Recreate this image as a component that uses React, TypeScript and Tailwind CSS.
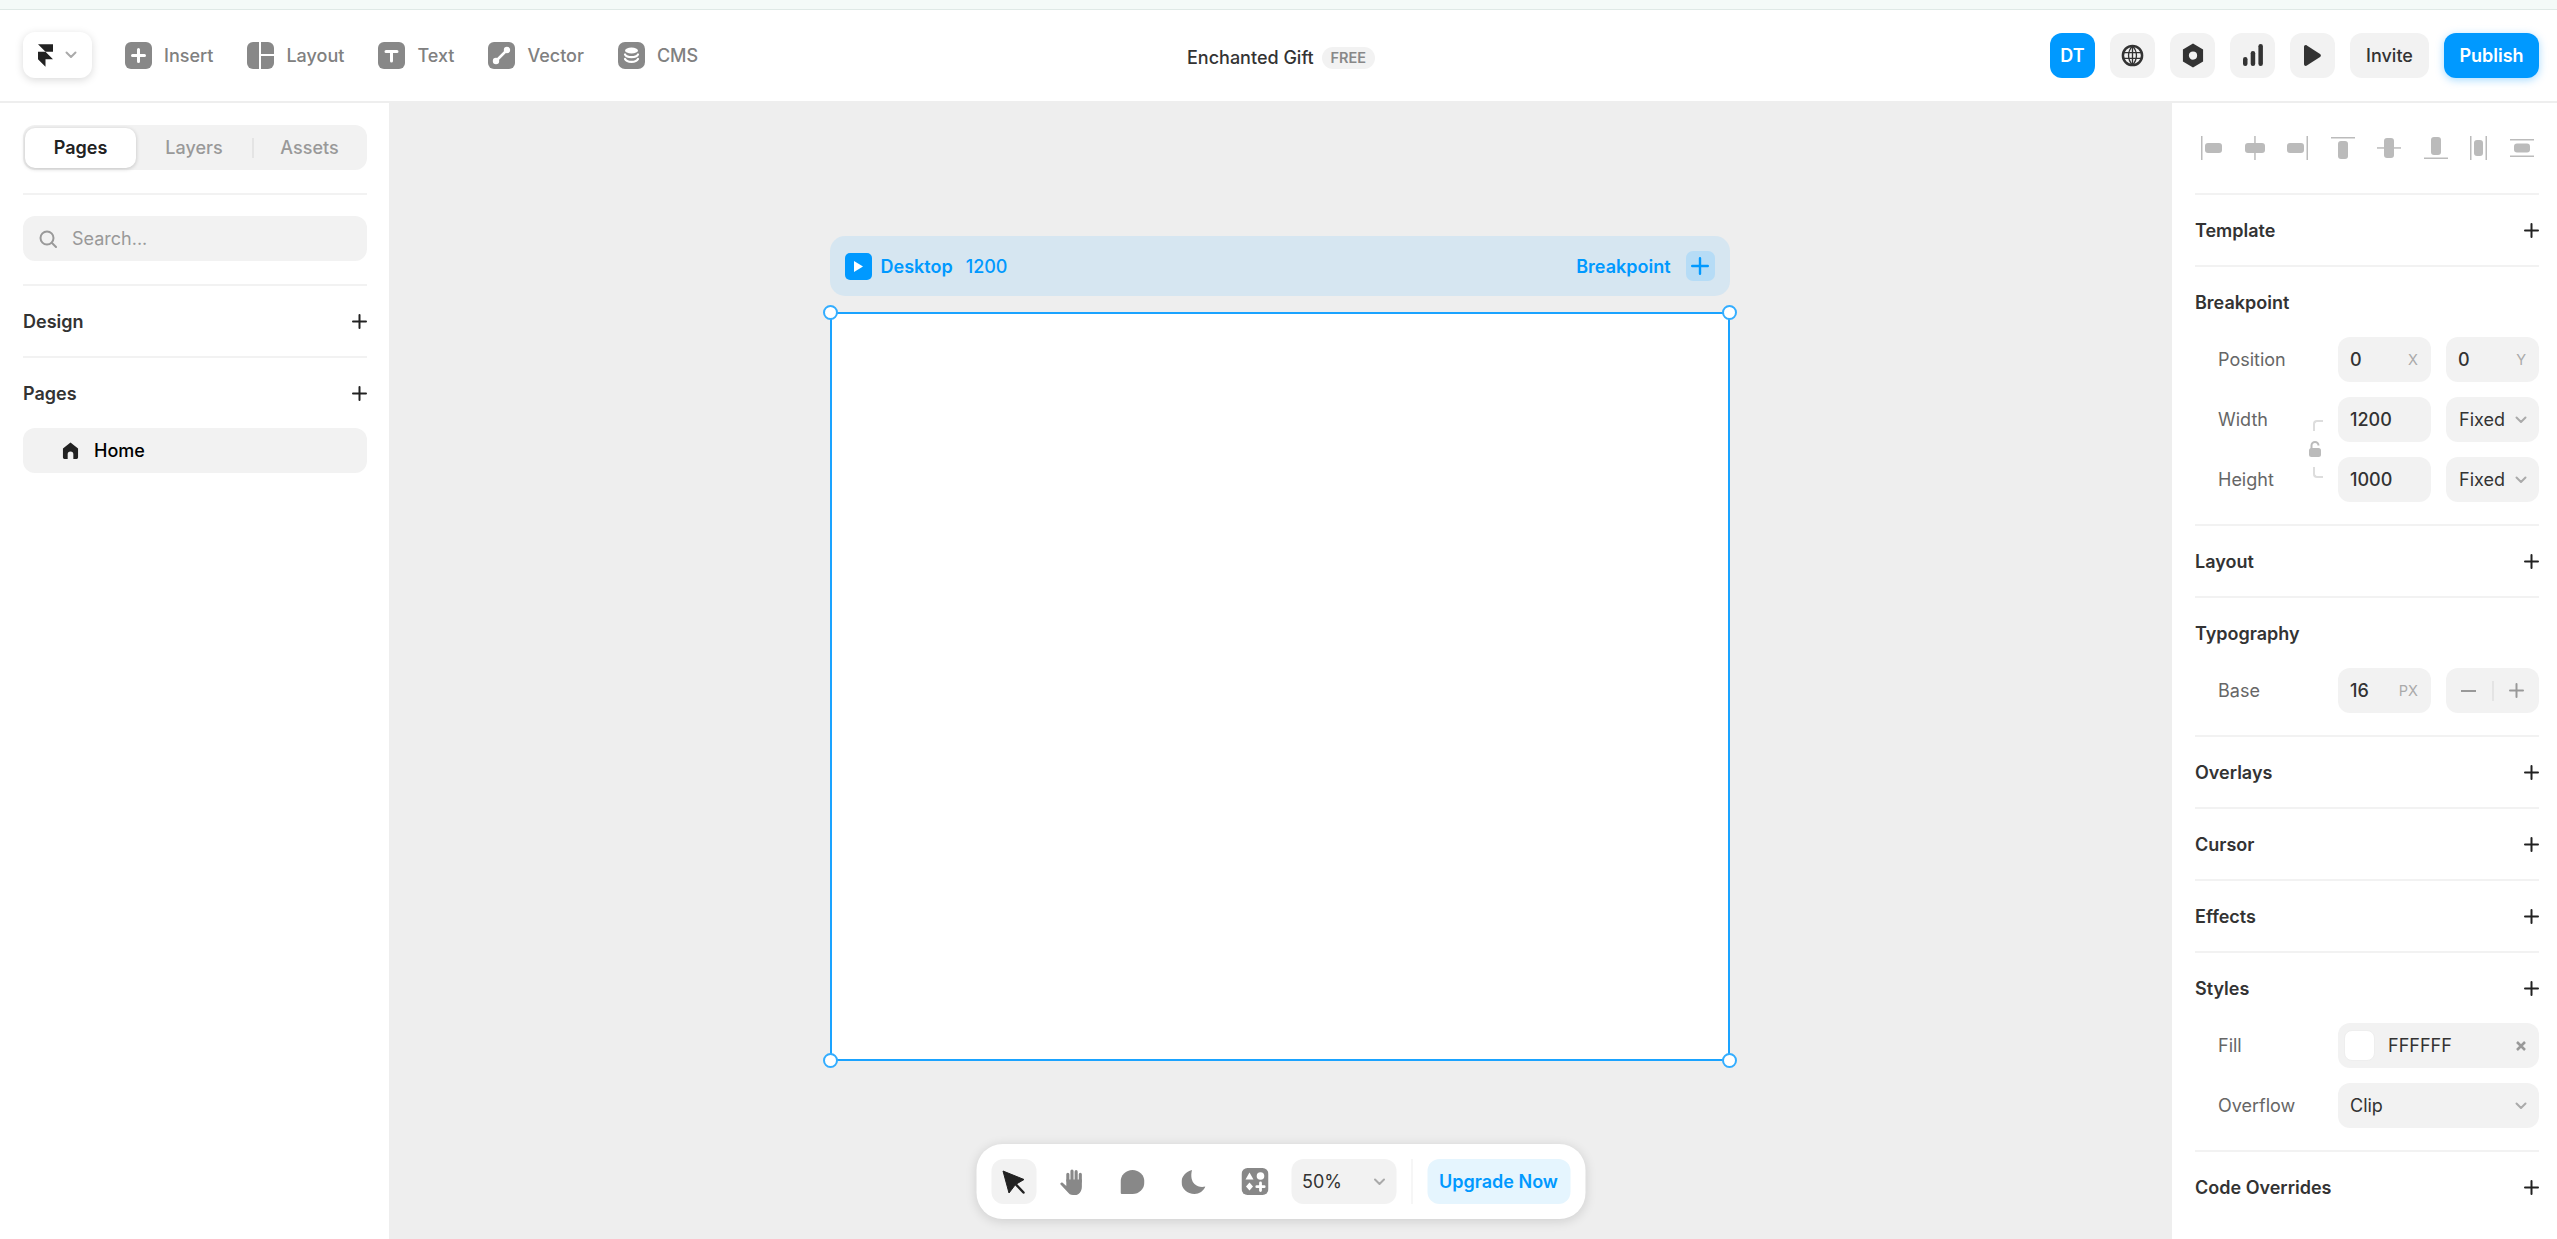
import type { ReactNode } from 'react'

const font = { fontFamily: 'Inter, "Liberation Sans", sans-serif' }

function Plus({ className = 'w-[15px] h-[15px] text-[#222]' }: { className?: string }) {
  return (
    <svg viewBox="0 0 15 15" className={className} fill="none" stroke="currentColor" strokeWidth="2" strokeLinecap="round">
      <path d="M7.5 1v13M1 7.5h13" />
    </svg>
  )
}

function Chevron({ className = 'w-[12px] h-[8px] text-[#aaa]' }: { className?: string }) {
  return (
    <svg viewBox="0 0 12 8" className={className} fill="none" stroke="currentColor" strokeWidth="2" strokeLinecap="round" strokeLinejoin="round">
      <path d="M1.5 1.5 6 6l4.5-4.5" />
    </svg>
  )
}

function FramerLogo() {
  return (
    <svg viewBox="0 0 16 24" className="w-[15px] h-[23px] text-[#222]" fill="currentColor">
      <path d="M0 0h16v8H8L0 0Z" />
      <path d="M0 8h8l8 8H8v8l-8-8V8Z" />
    </svg>
  )
}

function InsertIcon() {
  return (
    <svg viewBox="0 0 27 27" className="w-[27px] h-[27px]">
      <rect width="27" height="27" rx="6" fill="#888" />
      <path d="M13.5 7.5v12M7.5 13.5h12" stroke="#fff" strokeWidth="3" strokeLinecap="round" />
    </svg>
  )
}

function LayoutIcon() {
  return (
    <svg viewBox="0 0 27 27" className="w-[27px] h-[27px]" fill="#888">
      <path d="M6 0h6v27H6a6 6 0 0 1-6-6V6a6 6 0 0 1 6-6Z" />
      <path d="M14 0h7a6 6 0 0 1 6 6v6H14V0Z" />
      <path d="M14 14h13v7a6 6 0 0 1-6 6h-7V14Z" />
    </svg>
  )
}

function TextIcon() {
  return (
    <svg viewBox="0 0 27 27" className="w-[27px] h-[27px]">
      <rect width="27" height="27" rx="6" fill="#888" />
      <path d="M8 9.5h11M13.5 9.5V19" stroke="#fff" strokeWidth="3" strokeLinecap="round" />
    </svg>
  )
}

function VectorIcon() {
  return (
    <svg viewBox="0 0 27 27" className="w-[27px] h-[27px]">
      <rect width="27" height="27" rx="6" fill="#888" />
      <path d="M8.5 18.5 18.5 8.5" stroke="#fff" strokeWidth="2.5" />
      <circle cx="8" cy="19" r="3.2" fill="#fff" />
      <circle cx="19" cy="8" r="3.2" fill="#fff" />
    </svg>
  )
}

function CmsIcon() {
  return (
    <svg viewBox="0 0 27 27" className="w-[27px] h-[27px]">
      <rect width="27" height="27" rx="7" fill="#888" />
      <ellipse cx="13.5" cy="8.5" rx="6.5" ry="3" fill="#fff" />
      <path d="M7 12.5c1 1.8 3.5 2.7 6.5 2.7s5.500-.9 6.500-2.700M7 17c1 1.800 3.500 2.900 6.500 2.900s5.500-1.100 6.500-2.900" fill="none" stroke="#fff" strokeWidth="2.200" strokeLinecap="round" />
    </svg>
  )
}

function ToolItem({ icon, label }: { icon: ReactNode; label: string }) {
  return (
    <div className="flex items-center gap-[12px]">
      {icon}
      <span className="text-[18px] font-medium text-[#808080]">{label}</span>
    </div>
  )
}

function GrayButton({ children }: { children: ReactNode }) {
  return <div className="flex h-[45px] w-[45px] items-center justify-center rounded-[12px] bg-[#f2f2f2]">{children}</div>
}

function Divider() {
  return <div className="h-[2px] bg-[#f2f2f2]" />
}

function TopBar() {
  return (
    <header className="relative flex h-[91px] shrink-0 items-center justify-between bg-white pl-[23px] pr-[18px] pb-[1px]">
      <div className="flex items-center">
        <div className="flex h-[46px] w-[69px] items-center gap-[12px] rounded-[12px] bg-white pl-[15px] shadow-[0_2px_8px_rgba(0,0,0,0.15)]">
          <FramerLogo />
          <Chevron className="w-[12px] h-[8px] text-[#aaa]" />
        </div>
        <div className="ml-[33px] flex items-center gap-[34px]">
          <ToolItem icon={<InsertIcon />} label="Insert" />
          <ToolItem icon={<LayoutIcon />} label="Layout" />
          <ToolItem icon={<TextIcon />} label="Text" />
          <ToolItem icon={<VectorIcon />} label="Vector" />
          <ToolItem icon={<CmsIcon />} label="CMS" />
        </div>
      </div>
      <div className="absolute left-[1187px] top-[37px] flex items-center gap-[8px]">
        <span className="text-[18px] font-medium leading-[22px] text-[#333]">Enchanted Gift</span>
        <span className="flex h-[22px] w-[53px] items-center justify-center rounded-full bg-[#f2f2f2] text-[14.5px] font-semibold text-[#888]">FREE</span>
      </div>
      <div className="flex items-center gap-[15px]">
        <div className="flex h-[45px] w-[45px] items-center justify-center rounded-[12px] bg-[#0099ff] text-[18px] font-semibold text-white">DT</div>
        <GrayButton>
          <svg viewBox="0 0 24 24" className="w-[23px] h-[23px]" fill="none" stroke="#333" strokeWidth="2.600">
            <circle cx="12" cy="12" r="10" />
            <path d="M12 2c-5.500 6-5.500 14 0 20M12 2c5.500 6 5.500 14 0 20M3 9h18M3 15h18M12 2v20" strokeWidth="1.400" />
          </svg>
        </GrayButton>
        <GrayButton>
          <svg viewBox="0 0 24 26" className="w-[22px] h-[25px]">
            <path fillRule="evenodd" fill="#333" d="M12 0 23 6.500v13L12 26 1 19.500v-13L12 0Zm0 8.500a4.500 4.500 0 1 0 0 9 4.500 4.500 0 0 0 0-9Z" />
          </svg>
        </GrayButton>
        <GrayButton>
          <svg viewBox="0 0 20 22" className="w-[20px] h-[22px]" fill="#333">
            <rect x="0" y="13" width="4.500" height="9" rx="2.200" />
            <rect x="7.700" y="7" width="4.500" height="15" rx="2.200" />
            <rect x="15.400" y="0" width="4.500" height="22" rx="2.200" />
          </svg>
        </GrayButton>
        <GrayButton>
          <svg viewBox="0 0 18 22" className="w-[17px] h-[21px]" fill="#333">
            <path d="M0 2c0-1.700 1.600-2.500 3-1.700l14 9.200c1.200.8 1.200 2.200 0 3L3 21.700C1.600 22.500 0 21.700 0 20V2Z" />
          </svg>
        </GrayButton>
        <div className="flex h-[45px] w-[79px] items-center justify-center rounded-[12px] bg-[#f2f2f2] text-[18px] font-medium text-[#333]">Invite</div>
        <div className="flex h-[45px] w-[95px] items-center justify-center rounded-[12px] bg-[#0099ff] text-[18px] font-semibold text-white shadow-[0_2px_8px_rgba(0,153,255,0.35)]">Publish</div>
      </div>
    </header>
  )
}

function SideHeading({ title }: { title: string }) {
  return (
    <div className="flex h-[26px] items-center justify-between">
      <span className="text-[18px] font-semibold text-[#333]">{title}</span>
      <Plus />
    </div>
  )
}

function LeftPanel() {
  return (
    <aside className="flex w-[389px] shrink-0 flex-col bg-white pl-[23px] pr-[22px] pt-[22px]">
      <div className="flex h-[45px] items-center rounded-[12px] bg-[#f2f2f2] pl-[2px]">
        <div className="flex h-[40px] w-[111px] items-center justify-center rounded-[10px] bg-white text-[18px] font-semibold text-[#222] shadow-[0_1px_4px_rgba(0,0,0,0.2)]">Pages</div>
        <div className="flex w-[116px] justify-center text-[18px] font-medium text-[#999]">Layers</div>
        <div className="h-[20px] w-[2px] bg-[#e4e4e4]" />
        <div className="flex w-[111px] justify-center text-[18px] font-medium text-[#999]">Assets</div>
      </div>
      <div className="mt-[23px]">
        <Divider />
      </div>
      <div className="mt-[21px] flex h-[45px] items-center gap-[15px] rounded-[12px] bg-[#f2f2f2] pl-[16px]">
        <svg viewBox="0 0 18 18" className="w-[18px] h-[18px]" fill="none" stroke="#999" strokeWidth="2" strokeLinecap="round">
          <circle cx="8" cy="8" r="6.500" />
          <path d="m13 13 4 4" />
        </svg>
        <span className="text-[18px] text-[#999]">Search...</span>
      </div>
      <div className="mt-[23px]">
        <Divider />
      </div>
      <div className="py-[22px]">
        <SideHeading title="Design" />
      </div>
      <Divider />
      <div className="pt-[22px]">
        <SideHeading title="Pages" />
      </div>
      <div className="mt-[22px] flex h-[45px] items-center gap-[15px] rounded-[12px] bg-[#f2f2f2] pl-[39px]">
        <svg viewBox="0 0 18 18" className="w-[17px] h-[17px]" fill="#222">
          <path d="M9 0.500 17 7v9.500a1.500 1.500 0 0 1-1.500 1.500H12v-5a3 3 0 0 0-6 0v5H2.500A1.500 1.500 0 0 1 1 16.500V7l8-6.500Z" />
        </svg>
        <span className="text-[18px] font-medium text-black">Home</span>
      </div>
    </aside>
  )
}

function Handle({ className }: { className: string }) {
  return <div className={`absolute h-[15px] w-[15px] rounded-full border-2 border-[#33adff] bg-white ${className}`} />
}

function BottomToolbar() {
  return (
    <div className="absolute bottom-[20px] left-1/2 flex h-[75px] -translate-x-1/2 items-center gap-[16px] rounded-[26px] bg-white px-[15px] shadow-[0_2px_12px_rgba(0,0,0,0.14)]">
      <div className="flex h-[45px] w-[45px] items-center justify-center rounded-[12px] bg-[#f2f2f2]">
        <svg viewBox="0 0 24 24" className="w-[24px] h-[24px]" fill="#222">
          <path d="M1.500 1 22.500 9.500 14 14.500 7.500 23 1.500 1Z" strokeLinejoin="round" stroke="#222" strokeWidth="1" />
          <path d="m14 14 8 8.500" stroke="#222" strokeWidth="2.500" strokeLinecap="round" />
        </svg>
      </div>
      <div className="-ml-[3px] flex h-[45px] w-[45px] items-center justify-center">
        <svg viewBox="0 0 24 26" className="w-[25px] h-[27px]" fill="none" stroke="#888" strokeLinecap="round">
          <path d="M8 12V6M12 12V3M16 12V3.500M20 13V6" strokeWidth="3" />
          <path fill="#888" strokeWidth="0" d="M6.500 11h15v7c0 4.500-3 8-6.500 8h-2c-2.500 0-4-1.300-5.500-3.200L1 16c-.9-1.200.8-2.800 2-1.700l3.500 3V11Z" />
        </svg>
      </div>
      <div className="flex h-[45px] w-[45px] items-center justify-center">
        <svg viewBox="0 0 24 24" className="w-[24px] h-[24px]" fill="#888">
          <path d="M0 12a12 12 0 1 1 12 12H1.500A1.500 1.500 0 0 1 0 22.500V12Z" />
        </svg>
      </div>
      <div className="flex h-[45px] w-[45px] items-center justify-center">
        <svg viewBox="0 0 24 24" className="w-[24px] h-[24px]" fill="#888">
          <path d="M10.500 0C9 6 10 11 13 14c3 2.800 7 3.500 11 2.500C22 21 17.800 24 13 24 5.800 24 0 18.600 0 12 0 6.500 4.500 1.300 10.500 0Z" />
        </svg>
      </div>
      <div className="flex h-[45px] w-[45px] items-center justify-center">
        <svg viewBox="0 0 27 27" className="w-[27px] h-[27px]">
          <rect width="27" height="27" rx="6" fill="#888" />
          <path d="M8 4.500 12 11.500H4L8 4.500Z" fill="#fff" />
          <circle cx="19" cy="8" r="3.800" fill="#fff" />
          <path d="M8 14.500 11.500 18.500 8 22.500 4.500 18.500 8 14.500Z" fill="#fff" />
          <path d="M19 15v7.500M15.300 18.700h7.400" stroke="#fff" strokeWidth="2.800" strokeLinecap="round" />
        </svg>
      </div>
      <div className="-ml-[2px] flex h-[45px] w-[105px] items-center justify-between rounded-[12px] bg-[#f2f2f2] pl-[11px] pr-[11px]">
        <span className="text-[18px] text-[#333]">50%</span>
        <Chevron />
      </div>
      <div className="-mx-[1px] h-[45px] w-[1px] bg-[#eeeeee]" />
      <div className="flex h-[45px] w-[143px] items-center justify-center rounded-[12px] bg-[#e5f5fe] text-[18px] font-semibold text-[#0099ff]">Upgrade Now</div>
    </div>
  )
}

function Canvas() {
  return (
    <main className="relative flex min-w-0 flex-1 flex-col items-center bg-[#eeeeee] pr-[2px] pt-[133px]">
      <div className="flex h-[60px] w-[900px] items-center justify-between rounded-[15px] bg-[#d6e6f1] pl-[15px] pr-[15px]">
        <div className="flex items-center gap-[9px]">
          <div className="flex h-[27px] w-[27px] items-center justify-center rounded-[5px] bg-[#0099ff]">
            <svg viewBox="0 0 10 12" className="w-[9px] h-[11px]" fill="#fff">
              <path d="M0 0 10 6 0 12V0Z" />
            </svg>
          </div>
          <span className="text-[18px] font-semibold text-[#0099ff]">Desktop</span>
          <span className="ml-[4px] text-[18px] font-medium text-[#0099ff]">1200</span>
        </div>
        <div className="flex items-center gap-[15px]">
          <span className="text-[18px] font-semibold text-[#0099ff]">Breakpoint</span>
          <div className="flex h-[30px] w-[29px] items-center justify-center rounded-[7px] bg-[#b6dcf6]">
            <Plus className="w-[18px] h-[18px] text-[#0099ff]" />
          </div>
        </div>
      </div>
      <div className="relative mt-[16px] h-[749px] w-[900px] border-2 border-[#1aa3ff] bg-white">
        <Handle className="-left-[9px] -top-[9px]" />
        <Handle className="-right-[9px] -top-[9px]" />
        <Handle className="-bottom-[9px] -left-[9px]" />
        <Handle className="-bottom-[9px] -right-[9px]" />
      </div>
      <BottomToolbar />
    </main>
  )
}

function Section({ title, children, plus = true }: { title: string; children?: ReactNode; plus?: boolean }) {
  return (
    <section className="border-t-2 border-[#f2f2f2] py-[22px]">
      <div className="flex h-[26px] items-center justify-between">
        <span className="text-[18px] font-semibold text-[#333]">{title}</span>
        {plus && <Plus />}
      </div>
      {children && <div className="mt-[22px] flex flex-col gap-[15px]">{children}</div>}
    </section>
  )
}

function Row({ label, children }: { label: string; children: ReactNode }) {
  return (
    <div className="grid grid-cols-[105px_93px_93px] items-center gap-x-[15px] pl-[23px]">
      <span className="text-[18px] text-[#666]">{label}</span>
      {children}
    </div>
  )
}

function NumberField({ value, unit }: { value: string; unit?: string }) {
  return (
    <div className="flex h-[45px] items-center justify-between rounded-[12px] bg-[#f2f2f2] pl-[12px] pr-[13px]">
      <span className="text-[18px] font-medium text-[#333]">{value}</span>
      {unit && <span className="text-[14.500px] text-[#aaa]">{unit}</span>}
    </div>
  )
}

function FixedSelect() {
  return (
    <div className="flex h-[45px] items-center justify-between rounded-[12px] bg-[#f2f2f2] pl-[13px] pr-[12px]">
      <span className="text-[18px] text-[#333]">Fixed</span>
      <Chevron />
    </div>
  )
}

function AlignIcon({ children, w = 24 }: { children: ReactNode; w?: number }) {
  return (
    <svg viewBox={`0 0 ${w} 24`} width={w} height={24} fill="#bbb">
      {children}
    </svg>
  )
}

function AlignRow() {
  return (
    <div className="flex h-[90px] items-center justify-between pr-[5px] pl-[6px]">
      <AlignIcon w={21}>
        <rect x="0" y="0" width="1.500" height="24" />
        <rect x="4" y="7" width="17" height="10" rx="3" />
      </AlignIcon>
      <AlignIcon w={20}>
        <rect x="0" y="7" width="20" height="10" rx="3" />
        <rect x="9.200" y="0" width="1.500" height="24" />
      </AlignIcon>
      <AlignIcon w={21}>
        <rect x="0" y="7" width="17" height="10" rx="3" />
        <rect x="19.500" y="0" width="1.500" height="24" />
      </AlignIcon>
      <AlignIcon>
        <rect x="0" y="1" width="24" height="1.500" />
        <rect x="7" y="5" width="10" height="18" rx="3" />
      </AlignIcon>
      <AlignIcon>
        <rect x="7" y="2" width="10" height="20" rx="3" />
        <rect x="0" y="11.200" width="24" height="1.500" />
      </AlignIcon>
      <AlignIcon>
        <rect x="7" y="1" width="10" height="18" rx="3" />
        <rect x="0" y="21.500" width="24" height="1.500" />
      </AlignIcon>
      <AlignIcon w={17}>
        <rect x="0" y="0" width="1.500" height="24" />
        <rect x="4" y="4" width="9" height="16" rx="3" />
        <rect x="15.500" y="0" width="1.500" height="24" />
      </AlignIcon>
      <AlignIcon>
        <rect x="0" y="3" width="24" height="1.500" />
        <rect x="4" y="7.500" width="16" height="9" rx="3" />
        <rect x="0" y="19.500" width="24" height="1.500" />
      </AlignIcon>
    </div>
  )
}

function RightPanel() {
  return (
    <aside className="flex w-[385px] shrink-0 flex-col bg-white pl-[23px] pr-[18px]">
      <AlignRow />
      <Section title="Template" />
      <Section title="Breakpoint" plus={false}>
        <Row label="Position">
          <NumberField value="0" unit="X" />
          <NumberField value="0" unit="Y" />
        </Row>
        <div className="relative flex flex-col gap-[15px]">
          <Row label="Width">
            <NumberField value="1200" />
            <FixedSelect />
          </Row>
          <Row label="Height">
            <NumberField value="1000" />
            <FixedSelect />
          </Row>
          <div className="absolute left-[118px] top-[23px] flex h-[58px] w-[10px] flex-col items-end justify-between">
            <div className="h-[11px] w-[10px] rounded-tl-[4px] border-l-2 border-t-2 border-[#ddd]" />
            <div className="h-[11px] w-[10px] rounded-bl-[4px] border-b-2 border-l-2 border-[#ddd]" />
          </div>
          <svg viewBox="0 0 12 16" className="absolute left-[114px] top-[44px] w-[12px] h-[16px]">
            <path d="M2.500 8V4.500a3.500 3.500 0 0 1 7 0" fill="none" stroke="#bbb" strokeWidth="2" />
            <rect x="0" y="7" width="12" height="9" rx="2.500" fill="#bbb" />
          </svg>
        </div>
      </Section>
      <Section title="Layout" />
      <Section title="Typography" plus={false}>
        <Row label="Base">
          <NumberField value="16" unit="PX" />
          <div className="flex h-[45px] items-center rounded-[12px] bg-[#f2f2f2]">
            <div className="flex flex-1 justify-center">
              <div className="h-[2px] w-[15px] bg-[#999]" />
            </div>
            <div className="h-[20px] w-[2px] bg-[#e4e4e4]" />
            <div className="flex flex-1 justify-center">
              <Plus className="w-[15px] h-[15px] text-[#999]" />
            </div>
          </div>
        </Row>
      </Section>
      <Section title="Overlays" />
      <Section title="Cursor" />
      <Section title="Effects" />
      <Section title="Styles">
        <div className="grid grid-cols-[105px_201px] items-center gap-x-[15px] pl-[23px]">
          <span className="text-[18px] text-[#666]">Fill</span>
          <div className="flex h-[45px] items-center rounded-[12px] bg-[#f2f2f2] pl-[6px] pr-[13px]">
            <div className="h-[31px] w-[31px] rounded-[8px] border border-[#eeeeee] bg-white" />
            <span className="ml-[13px] flex-1 text-[18px] text-[#333]">FFFFFF</span>
            <svg viewBox="0 0 10 10" className="w-[10px] h-[10px]" fill="none" stroke="#999" strokeWidth="2.500">
              <path d="m1 1 8 8M9 1 1 9" />
            </svg>
          </div>
        </div>
        <div className="grid grid-cols-[105px_201px] items-center gap-x-[15px] pl-[23px]">
          <span className="text-[18px] text-[#666]">Overflow</span>
          <div className="flex h-[45px] items-center justify-between rounded-[12px] bg-[#f2f2f2] pl-[12px] pr-[12px]">
            <span className="text-[18px] text-[#333]">Clip</span>
            <Chevron />
          </div>
        </div>
      </Section>
      <Section title="Code Overrides" />
    </aside>
  )
}

export default function App() {
  return (
    <div className="flex h-[1239px] w-[2557px] flex-col overflow-hidden bg-white" style={font}>
      <div className="h-[10px] shrink-0 border-b border-[#dfe9e6] bg-[#f4faf8]" />
      <TopBar />
      <div className="h-[2px] shrink-0 bg-[#eeeeee]" />
      <div className="flex min-h-0 flex-1">
        <LeftPanel />
        <Canvas />
        <RightPanel />
      </div>
    </div>
  )
}
